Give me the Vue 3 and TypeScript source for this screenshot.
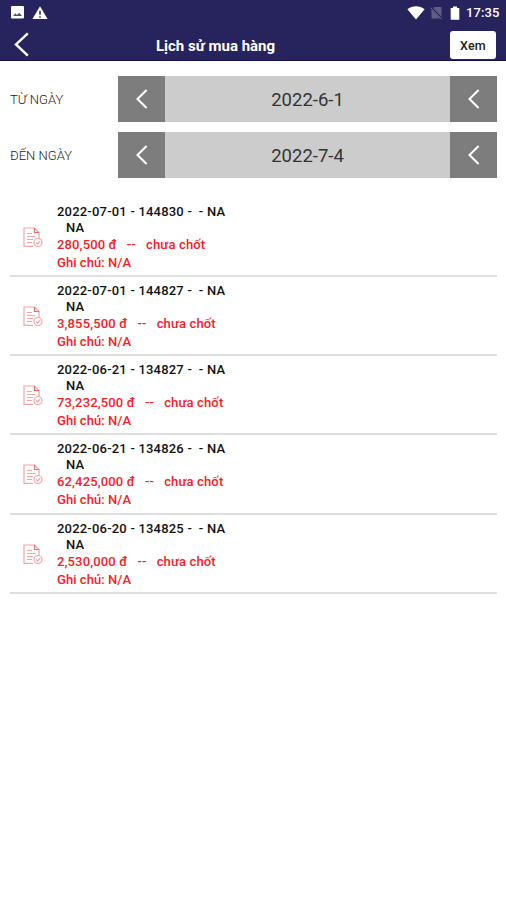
<script setup lang="ts">
interface Order {
  date: string
  code: string
  total: string
}

const filters = [
  { label: 'TỪ NGÀY', value: '2022-6-1' },
  { label: 'ĐẾN NGÀY', value: '2022-7-4' },
]

const orders: Order[] = [
  { date: '2022-07-01', code: '144830', total: '280,500' },
  { date: '2022-07-01', code: '144827', total: '3,855,500' },
  { date: '2022-06-21', code: '134827', total: '73,232,500' },
  { date: '2022-06-21', code: '134826', total: '62,425,000' },
  { date: '2022-06-20', code: '134825', total: '2,530,000' },
]
</script>

<template>
  <div class="screen">
    <header class="header">
      <div class="status">
        <svg class="picture" width="13" height="13" viewBox="0 0 13 13">
          <rect width="13" height="12.5" rx="1.2" fill="#fff" />
          <path d="M2 10 4.3 7.2 6 9 8.3 6.8 11 10Z" fill="#55526f" />
        </svg>
        <svg class="warning" width="16" height="14" viewBox="0 0 16 14">
          <path d="M8 .3 15.6 13H.4Z" fill="#fff" />
          <path d="M8 4.8v4M8 10.2v1.6" stroke="#27235c" stroke-width="1.5" />
        </svg>
        <span class="spacer"></span>
        <svg class="wifi" width="18" height="14" viewBox="0 0 18 14">
          <path d="M.4 3.2C5.2-.8 12.8-.8 17.6 3.2L9 13.6Z" fill="#fff" />
        </svg>
        <svg class="sim" width="13" height="14" viewBox="0 0 13 14">
          <path d="M4.5 1H11.5V12.5H1.5V4Z" fill="#625f87" />
          <path d="M.8 1.2 12.3 13" stroke="#27235c" stroke-width="2.2" />
          <path d="M.3 1.5 11.8 13.3" stroke="#777498" stroke-width="1" />
        </svg>
        <svg class="battery" width="10" height="14" viewBox="0 0 10 14">
          <path d="M3 .5H7V2H9.3V13.8H.7V2H3Z" fill="#fff" />
        </svg>
        <span class="clock">17:35</span>
      </div>
      <div class="toolbar">
        <svg class="back" width="16" height="25" viewBox="0 0 16 25">
          <path d="M14.8 1.3 3 12.4 14.8 23.6" fill="none" stroke="#fff" stroke-width="2.4" />
        </svg>
        <h1 class="title">Lịch sử mua hàng</h1>
        <button class="view">Xem</button>
      </div>
    </header>

    <section class="filters">
      <div v-for="f in filters" :key="f.label" class="filter">
        <span class="label">{{ f.label }}</span>
        <div class="picker">
          <button v-for="side in 2" :key="side" class="step" :class="{ last: side === 2 }">
            <svg width="12" height="20" viewBox="0 0 12 20">
              <path d="M10.6 1 1.5 10 10.6 19" fill="none" stroke="#fff" stroke-width="2" />
            </svg>
          </button>
          <span class="value">{{ f.value }}</span>
        </div>
      </div>
    </section>

    <ul class="orders">
      <li v-for="o in orders" :key="o.code" class="order">
        <svg class="doc" width="20" height="21" viewBox="0 0 20 21" fill="none" stroke="#f7a3a3" stroke-width="1.2">
          <path d="M10 19.3H1V1H11.5L16 5.5V11" />
          <path d="M11.5 1V5.5H16" stroke="#ee6a6a" />
          <path d="M4 6.5H9M4 9.5H12.5M4 12.5H10M4 15.5H9" />
          <circle cx="15" cy="15.5" r="4" />
          <path d="M13.2 15.5 14.6 17 16.9 14.3" />
        </svg>
        <div class="text">
          <p class="line">{{ o.date }} - {{ o.code }} -&nbsp; - NA</p>
          <p class="line customer">NA</p>
          <p class="line red">{{ o.total }} đ&nbsp;&nbsp; --&nbsp;&nbsp; chưa chốt</p>
          <p class="line red note">Ghi chú: N/A</p>
        </div>
      </li>
    </ul>
  </div>
</template>

<style>
body {
  background: #fff;
}
</style>

<style scoped>
.screen {
  width: 506px;
  height: 900px;
  overflow: hidden;
  background: #fff;
  color: #111;
  font-family: Roboto, "Liberation Sans", sans-serif;
}
button {
  padding: 0;
  border: 0;
  font-family: inherit;
}
.header {
  box-sizing: border-box;
  height: 61px;
  background: #27235c;
  border-bottom: 1px solid #171150;
  color: #fff;
}
.status {
  display: flex;
  align-items: center;
  height: 25px;
  padding: 0 6px 0 11px;
}
.warning {
  margin-left: 8px;
}
.spacer {
  flex: 1;
}
.sim {
  margin-left: 5px;
}
.battery {
  margin-left: 7px;
}
.clock {
  width: 34px;
  margin-left: 6px;
  font-size: 13px;
  font-weight: 500;
  letter-spacing: 0.1px;
  white-space: nowrap;
}
.toolbar {
  display: grid;
  grid-template-columns: 46px 1fr 46px;
  align-items: center;
  height: 28px;
  padding: 6px 10px 0 13px;
}
.back {
  margin-top: -1px;
}
.title {
  margin: 1px 0 0;
  padding-right: 78px;
  text-align: center;
  font-size: 15px;
  line-height: 20px;
  font-weight: 700;
}
.view {
  height: 28px;
  border-radius: 3px;
  background: #fff;
  color: #222;
  font-size: 12.5px;
  font-weight: 500;
  letter-spacing: 0.2px;
}
.filters {
  display: grid;
  gap: 10px;
  padding: 15px 9px 0 10px;
}
.filter {
  display: grid;
  grid-template-columns: 108px 1fr;
  align-items: center;
}
.label {
  font-size: 13px;
  font-weight: 300;
  color: #222;
}
.picker {
  display: grid;
  grid-template-columns: 47px 1fr 47px;
  grid-template-rows: 46px;
  background: #ccc;
}
.step {
  grid-row: 1;
  grid-column: 1;
  display: flex;
  align-items: center;
  justify-content: center;
  background: #7d7d7d;
}
.step.last {
  grid-column: 3;
}
.value {
  grid-row: 1;
  grid-column: 2;
  text-align: center;
  font-size: 18.5px;
  line-height: 48px;
  color: #333;
}
.orders {
  margin: 19.5px 9px 0 10px;
  padding: 0;
  list-style: none;
}
.order {
  box-sizing: border-box;
  display: flex;
  height: 79.25px;
  padding: 6px 0 0 13px;
  border-bottom: 2px solid #dedede;
}
.doc {
  flex: none;
  margin: 23px 14px 0 0;
}
.line {
  margin: 0;
  font-size: 13px;
  line-height: 18px;
  font-weight: 500;
  letter-spacing: 0.2px;
  white-space: nowrap;
}
.line:first-child {
  line-height: 16px;
}
.line.customer {
  padding-left: 9px;
  line-height: 16px;
}
.line.red {
  color: #fb2024;
  letter-spacing: 0.14px;
}
.line.note {
  letter-spacing: 0.06px;
}
</style>
